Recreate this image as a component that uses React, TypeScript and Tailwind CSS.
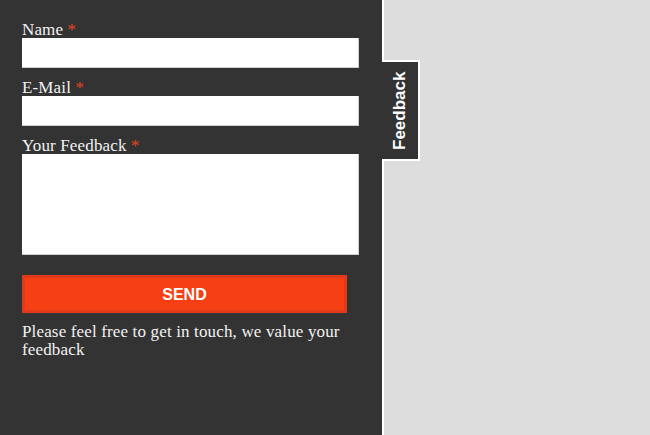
export default function App() {
  const serif = { fontFamily: '"Liberation Serif", serif' };
  return (
    <div className="flex w-[650px] h-[435px] bg-[#dddddd] overflow-hidden">
      <div
        className="w-[384px] h-full bg-[#333333] border-r-2 border-white pl-[22px] pr-[23px] pt-[21px] text-[#f2f2f2] text-[17px] leading-[17px] tracking-[0.15px] shrink-0"
        style={serif}
      >
        <label className="block">
          Name <span className="text-[#e5461c]">*</span>
        </label>
        <div className="h-[30px] w-[337px] bg-white border-r border-b border-[#cfcfcf] mb-[11px]" />
        <label className="block">
          E-Mail <span className="text-[#e5461c]">*</span>
        </label>
        <div className="h-[30px] w-[337px] bg-white border-r border-b border-[#cfcfcf] mb-[11px]" />
        <label className="block">
          Your Feedback <span className="text-[#e5461c]">*</span>
        </label>
        <div className="h-[101px] w-[337px] bg-white border-r border-b border-[#cfcfcf]" />
        <div
          className="mt-[20px] h-[38px] w-[325px] bg-[#f63f12] border-[3px] border-[#e2391a] flex items-center justify-center text-white text-[16px] font-bold tracking-normal"
          style={{ fontFamily: '"Liberation Sans", Arial, sans-serif' }}
        >
          SEND
        </div>
        <p className="mt-[10px] w-[330px] leading-[18px]">Please feel free to get in touch, we value your feedback</p>
      </div>
      <div className="pt-[60px] -ml-[2px]">
        <div className="w-[38px] h-[101px] bg-[#333333] border-t-2 border-r-2 border-b-2 border-white flex items-center justify-center">
          <span
            className="block -rotate-90 whitespace-nowrap text-white text-[17px] font-bold"
            style={{ fontFamily: '"Liberation Sans", Arial, sans-serif' }}
          >
            Feedback
          </span>
        </div>
      </div>
    </div>
  );
}
